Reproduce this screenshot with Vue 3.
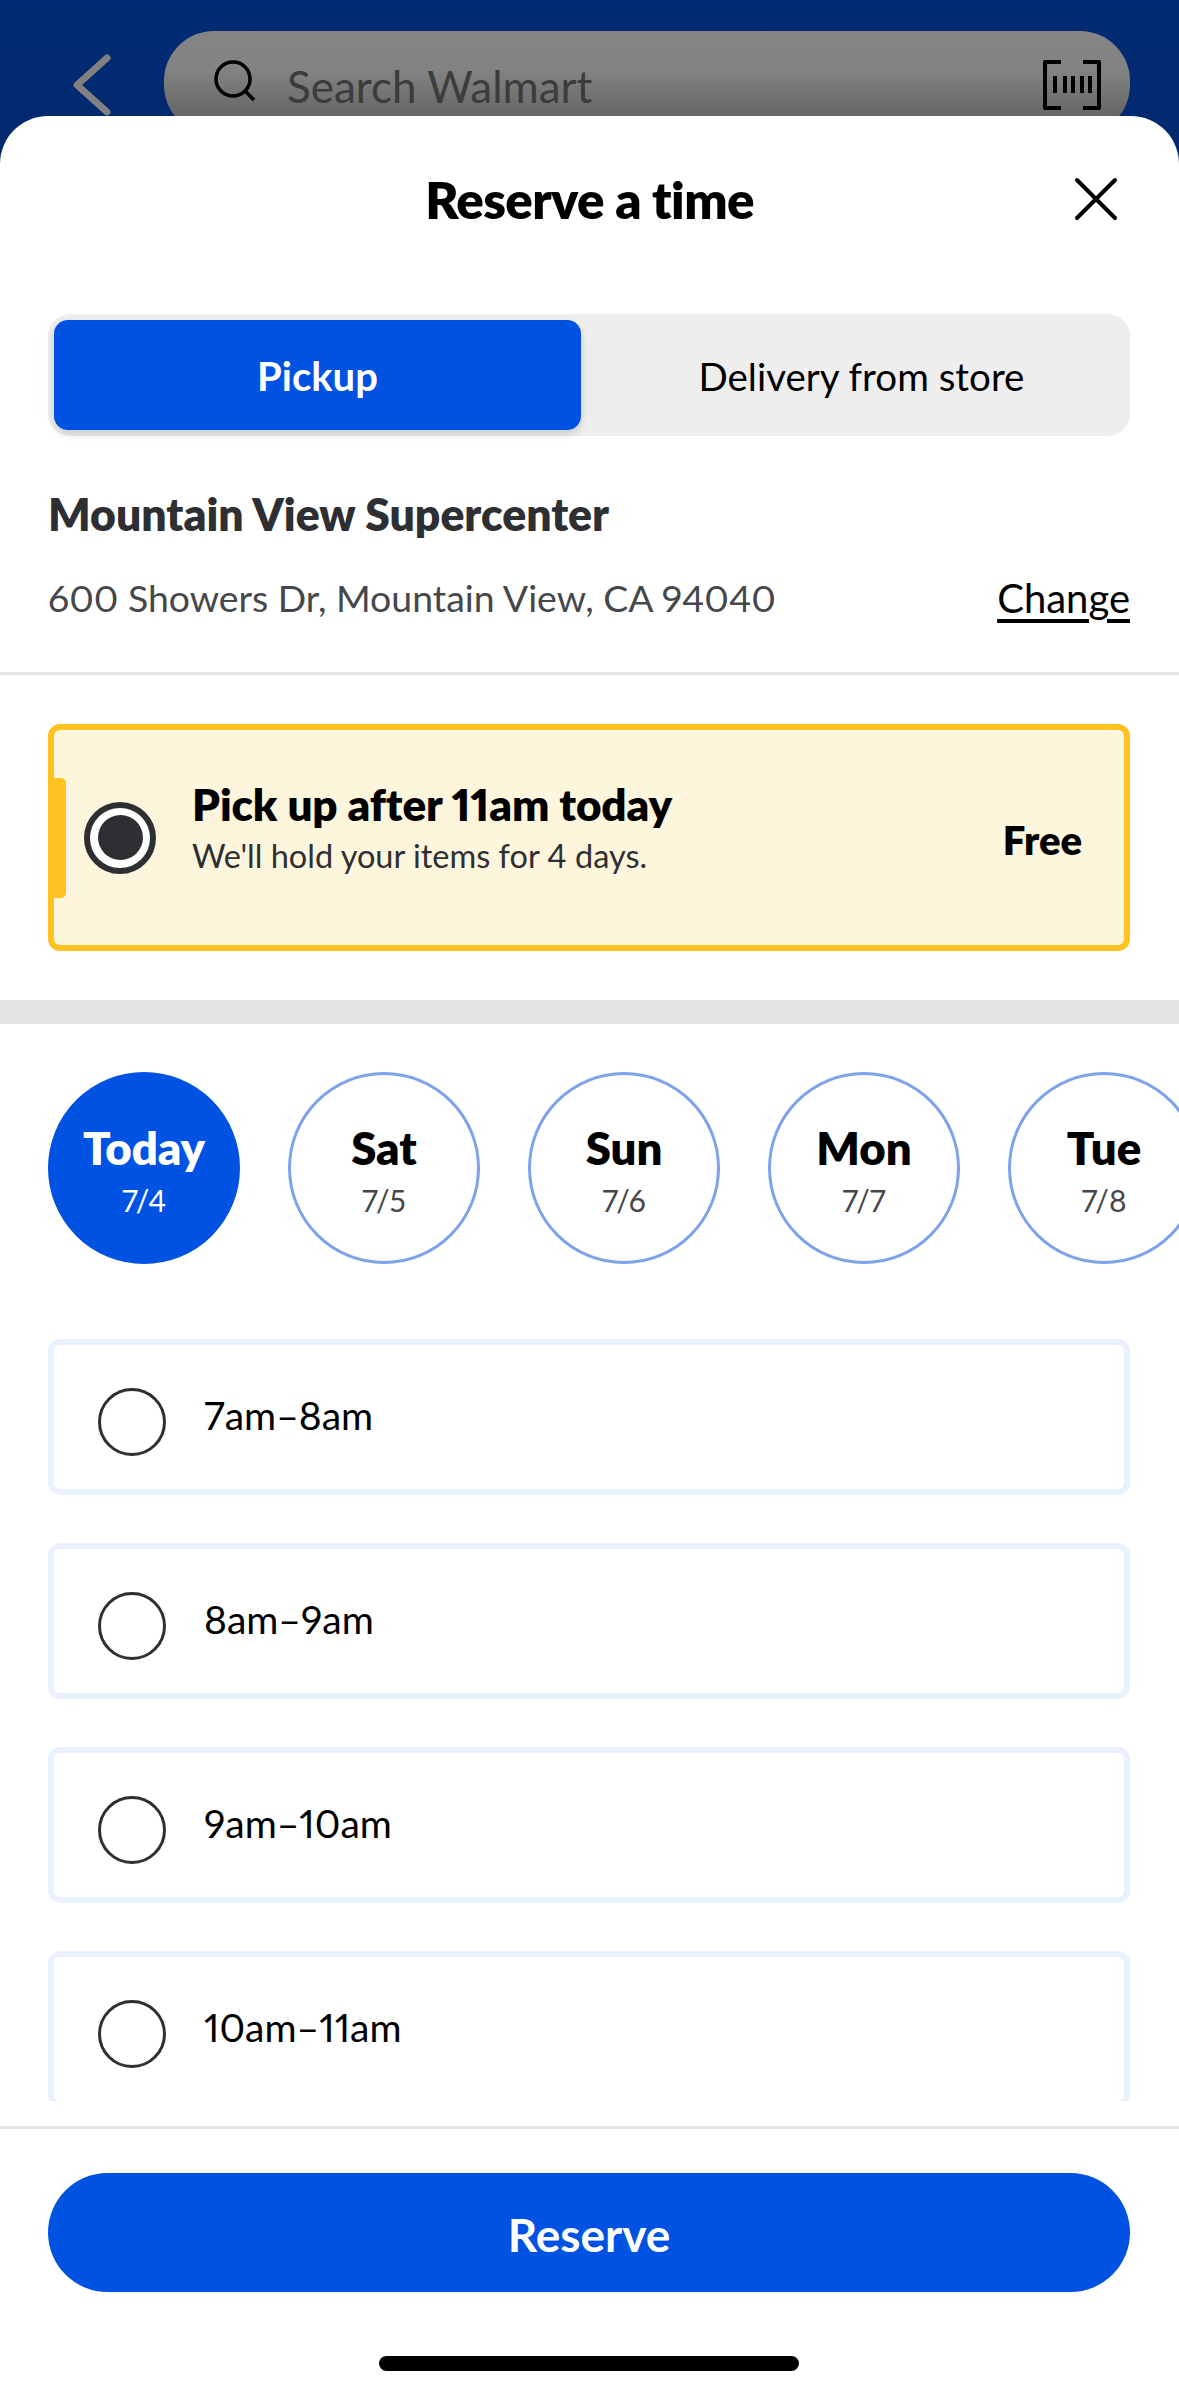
<template>
  <div class="page">
    <header class="topbar">
      <svg class="back" width="44" height="64" viewBox="0 0 44 64">
        <path d="M37 6 L7 33 L37 60" fill="none" stroke="#808080" stroke-width="7" stroke-linecap="round" stroke-linejoin="round" />
      </svg>
      <div class="search">
        <svg class="search-icon" width="46" height="46" viewBox="0 0 46 46">
          <circle cx="21" cy="20" r="17" fill="none" stroke="#000" stroke-width="3.5" />
          <path d="M33 32 L42 41" stroke="#000" stroke-width="3.5" fill="none" />
        </svg>
        <span class="search-text">Search Walmart</span>
        <svg class="barcode" width="60" height="52" viewBox="0 0 60 52">
          <path d="M19 3 H3 V49 H19 M41 3 H57 V49 H41" fill="none" stroke="#000" stroke-width="4" stroke-linejoin="round" />
          <path d="M13 17 V34 M23 17 V34 M31 17 V34 M40 17 V34 M48 17 V34" stroke="#000" stroke-width="4" fill="none" />
        </svg>
      </div>
    </header>

    <main class="sheet">
      <div class="title-row">
        <h1>Reserve a time</h1>
        <svg class="close" width="44" height="44" viewBox="0 0 44 44">
          <path d="M3 3 L41 41 M41 3 L3 41" stroke="#000" stroke-width="4" fill="none" stroke-linecap="round" />
        </svg>
      </div>

      <div class="tabs">
        <div class="tab active">Pickup</div>
        <div class="tab">Delivery from store</div>
      </div>

      <section class="store">
        <div class="store-name">Mountain View Supercenter</div>
        <div class="store-line">
          <span>600 Showers Dr, Mountain View, CA 94040</span>
          <a class="change">Change</a>
        </div>
      </section>

      <div class="option">
        <span class="option-tab"></span>
        <span class="option-radio"><span></span></span>
        <div class="option-text">
          <div class="option-title">Pick up after 11am today</div>
          <div class="option-sub">We'll hold your items for 4 days.</div>
        </div>
        <div class="option-price">Free</div>
      </div>

      <div class="band"></div>

      <div class="dates">
        <div v-for="(d, i) in dias" :key="d.nombre" class="date" :class="{ selected: i === 0 }">
          <div class="date-name">{{ d.nombre }}</div>
          <div class="date-num">{{ d.fecha }}</div>
        </div>
      </div>

      <div class="slots">
        <div v-for="h in horas" :key="h" class="slot">
          <span class="slot-radio"></span>
          <span class="slot-text">{{ h }}</span>
        </div>
      </div>

      <footer class="bottom">
        <button type="button" class="reserve">Reserve</button>
        <div class="home"></div>
      </footer>
    </main>
  </div>
</template>

<script setup>
const dias = [
  { nombre: "Today", fecha: "7/4" },
  { nombre: "Sat", fecha: "7/5" },
  { nombre: "Sun", fecha: "7/6" },
  { nombre: "Mon", fecha: "7/7" },
  { nombre: "Tue", fecha: "7/8" },
];

const horas = ["7am–8am", "8am–9am", "9am–10am", "10am–11am"];
</script>

<style>
html,
body {
  margin: 0;
  background: #fff;
}
</style>

<style scoped>
.page {
  width: 1179px;
  height: 2396px;
  overflow: hidden;
  font-family: "Lato", "Open Sans", sans-serif;
  font-variant-numeric: proportional-nums;
  color: #2e2f32;
}

.topbar {
  height: 164px;
  box-sizing: border-box;
  padding: 31px 49px 0 70px;
  display: flex;
  align-items: flex-start;
  background: linear-gradient(#012b74, #01296e);
}

.back {
  margin-top: 21px;
  margin-right: 50px;
  flex: none;
}

.search {
  flex: 1;
  height: 104px;
  border-radius: 50px;
  background: linear-gradient(#858585 0, #828282 40px, #666 85px);
  display: flex;
  align-items: flex-start;
  padding: 0 28px 0 48px;
}

.search-icon {
  margin-top: 28px;
  flex: none;
}

.search-text {
  margin-left: 29px;
  margin-top: 28px;
  font-size: 44px;
  line-height: 54px;
  color: #3c3c3c;
  flex: 1;
}

.barcode {
  margin-top: 28px;
  flex: none;
}

.sheet {
  margin-top: -48px;
  height: 2280px;
  background: #fff;
  border-radius: 48px 48px 0 0;
  position: relative;
  display: flex;
  flex-direction: column;
}

.title-row {
  height: 166px;
  margin-bottom: 2px;
  display: flex;
  align-items: center;
  justify-content: center;
  position: relative;
  flex: none;
}

h1 {
  margin: 0;
  font-size: 51px;
  letter-spacing: -0.6px;
  font-weight: 800;
  color: #000;
}

.close {
  position: absolute;
  right: 61px;
  top: 61px;
}

.tabs {
  margin: 30px 49px 0 48px;
  height: 122px;
  box-sizing: border-box;
  padding: 6px;
  display: grid;
  grid-template-columns: 527px 1fr;
  background: #eee;
  border-radius: 22px;
  flex: none;
}

.tab {
  display: flex;
  align-items: center;
  justify-content: center;
  font-size: 38.5px;
  color: #000;
  padding: 2px 0 0 18px;
}

.tab.active {
  padding-left: 0;
  background: #0053e2;
  color: #fff;
  font-size: 40px;
  font-weight: 700;
  border-radius: 14px;
  box-shadow: 0 4px 8px rgba(0, 0, 0, 0.14);
}

.store {
  margin-top: 50px;
  padding: 0 49px 46px 48px;
  border-bottom: 3px solid #e3e4e5;
  flex: none;
}

.store-name {
  font-size: 44.5px;
  line-height: 56px;
  font-weight: 800;
}

.store-line {
  margin-top: 28px;
  display: flex;
  justify-content: space-between;
  font-size: 37.4px;
  line-height: 56px;
  color: #46474a;
}

.change {
  color: #000;
  font-size: 40px;
  text-decoration: underline;
  text-underline-offset: 6px;
}

.option {
  margin: 49px 49px 0 48px;
  height: 227px;
  box-sizing: border-box;
  border: 6px solid #ffc220;
  border-radius: 12px;
  background: #fef5dd;
  position: relative;
  display: flex;
  align-items: center;
  padding: 0 42px 0 30px;
  flex: none;
}

.option-tab {
  position: absolute;
  left: 0;
  top: 48px;
  width: 12px;
  height: 120px;
  background: #ffc220;
  border-radius: 0 5px 5px 0;
}

.option-radio {
  width: 72px;
  height: 72px;
  box-sizing: border-box;
  border: 6px solid #2e2f32;
  border-radius: 50%;
  background: #fff;
  display: flex;
  align-items: center;
  justify-content: center;
  flex: none;
}

.option-radio span {
  width: 45px;
  height: 45px;
  border-radius: 50%;
  background: #2e2f32;
}

.option-text {
  margin-left: 36px;
  padding-bottom: 21px;
  flex: 1;
}

.option-title {
  font-size: 44px;
  letter-spacing: -0.1px;
  line-height: 52px;
  font-weight: 800;
  color: #000;
}

.option-sub {
  margin-top: 6px;
  font-size: 32.5px;
  line-height: 40px;
}

.option-price {
  margin-top: 5px;
  font-size: 40px;
  font-weight: 800;
  color: #000;
}

.band {
  margin-top: 49px;
  height: 24px;
  background: #e3e4e5;
  flex: none;
}

.dates {
  margin-top: 48px;
  padding-left: 48px;
  display: flex;
  gap: 48px;
  overflow: hidden;
  flex: none;
}

.date {
  width: 192px;
  height: 192px;
  box-sizing: border-box;
  padding-top: 5px;
  border: 3px solid #7ea3ea;
  border-radius: 50%;
  display: flex;
  flex-direction: column;
  align-items: center;
  justify-content: center;
  flex: none;
}

.date.selected {
  background: #0053e2;
  border-color: #0053e2;
  color: #fff;
}

.date-name {
  font-size: 45.5px;
  line-height: 48px;
  font-weight: 800;
  color: #000;
}

.date-num {
  margin-top: 10px;
  font-size: 30px;
  line-height: 36px;
  color: #46474a;
}

.selected .date-name,
.selected .date-num {
  color: #fff;
}

.slots {
  margin: 75px 49px 0 48px;
  height: 762px;
  overflow: hidden;
  display: flex;
  flex-direction: column;
  gap: 48px;
  flex: none;
}

.slot {
  height: 156px;
  box-sizing: border-box;
  border: 6px solid #e9f1fe;
  border-radius: 12px;
  padding: 43px 0 0 44px;
  display: flex;
  align-items: flex-start;
  flex: none;
}

.slot-radio {
  width: 68px;
  height: 68px;
  box-sizing: border-box;
  border: 3px solid #2e2f32;
  border-radius: 50%;
  flex: none;
}

.slot-text {
  margin-left: 38px;
  margin-top: 5px;
  font-size: 39px;
  line-height: 44px;
  color: #000;
}

.bottom {
  margin-top: 25px;
  border-top: 3px solid #e3e4e5;
  padding: 44px 49px 0 48px;
  flex: none;
}

.reserve {
  display: block;
  width: 100%;
  height: 119px;
  border: none;
  border-radius: 60px;
  background: #0053e2;
  color: #fff;
  font-family: inherit;
  font-size: 46px;
  font-weight: 700;
  padding: 4px 0 0;
}

.home {
  margin: 64px auto 0;
  width: 420px;
  height: 15px;
  border-radius: 8px;
  background: #000;
}
</style>
